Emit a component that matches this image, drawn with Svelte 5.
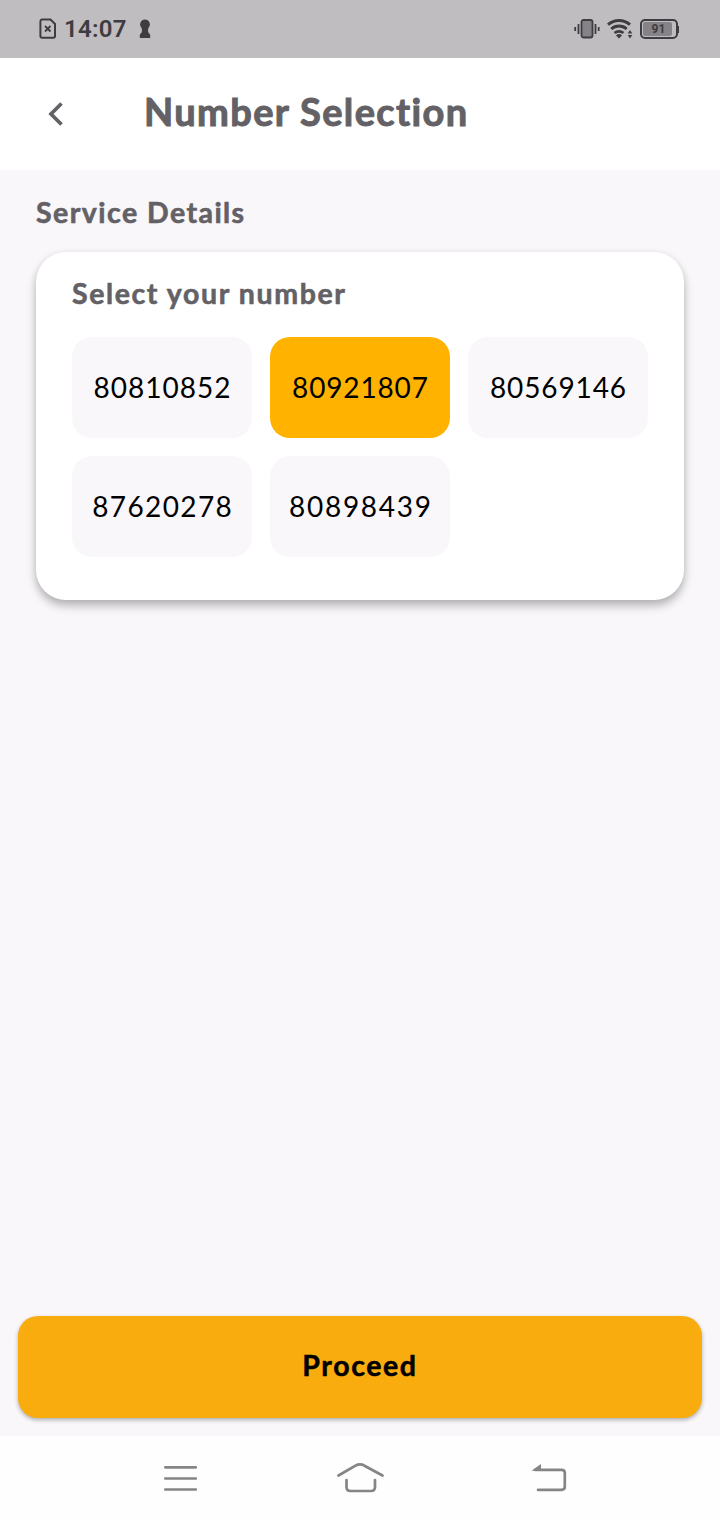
<script>
  const numbers = [
    { value: '80810852', spacing: 1.0 },
    { value: '80921807', spacing: 0.85 },
    { value: '80569146', spacing: 0.9 },
    { value: '87620278', spacing: 1.4 },
    { value: '80898439', spacing: 1.7 }
  ];
  let selected = $state('80921807');
</script>

<div class="screen">
  <div class="status">
    <svg class="sim" width="18" height="22" viewBox="0 0 18 22" fill="none" stroke="#3e3c40" stroke-width="2">
      <path d="M3 1.5h8.5l4.500 4.500v12a1.800 1.800 0 0 1-1.800 1.800H3.200A1.800 1.800 0 0 1 1.400 18V3.200A1.800 1.800 0 0 1 3 1.500Z" />
      <path d="m6 8 5.500 5.500m0-5.500L6 13.500" stroke-width="1.800" />
    </svg>
    <span class="time">14:07</span>
    <svg class="keyhole" width="12" height="20" viewBox="0 0 12 20" fill="#3e3c40">
      <path d="M6 .5a4.900 4.900 0 0 1 3.500 8.300L9.300 10l-.4.8.4 2.400 1.900 2.500V19H.8V15.700l1.900-2.500.4-2.400-.4-.8-.2-1.200A4.900 4.900 0 0 1 6 .5Z" />
    </svg>
    <div class="spacer"></div>
    <svg class="vibrate" width="26" height="22" viewBox="0 0 26 22" fill="none" stroke="#3e3c40" stroke-width="1.800">
      <rect x="7.500" y="2" width="11" height="17.500" rx="2" fill="#858387" />
      <path d="M4.500 6v10M1.200 9v4M21.500 6v10M24.700 9v4" />
    </svg>
    <svg class="wifi" width="27" height="22" viewBox="0 0 27 22" fill="none" stroke="#3e3c40" stroke-width="2.900">
      <path d="M1 6.700a16.500 16.500 0 0 1 22 0M4.300 11a11.500 11.500 0 0 1 15.400 0M7.600 15a6.800 6.800 0 0 1 8.800 0" />
      <path d="m12 20.500-3-3a4.400 4.400 0 0 1 6 0Zm11-8.500 2.300 3.500h-4.600ZM23 20.500 20.700 17h4.600Z" fill="#3e3c40" stroke="none" />
    </svg>
    <div class="battery"><div class="charge"></div><span>91</span></div>
    <i class="nub"></i>
  </div>

  <header>
    <svg width="16" height="26" viewBox="0 0 16 26" fill="none" stroke="#636165" stroke-width="3.700">
      <path d="M14.500 2.500 4 13 14.500 23.500" />
    </svg>
    <h1>Number Selection</h1>
  </header>

  <main>
    <h2>Service Details</h2>
    <section>
      <h3>Select your number</h3>
      <div class="grid">
        {#each numbers as n (n.value)}
          <button
            class="number"
            class:selected={selected === n.value}
            onclick={() => (selected = n.value)}
          ><span style="letter-spacing: {n.spacing}px; margin-right: -{n.spacing}px">{n.value}</span></button>
        {/each}
      </div>
    </section>
    <button class="proceed">Proceed</button>
  </main>

  <nav>
    <svg width="36" height="30" viewBox="0 0 36 30" fill="none" stroke="#858585" stroke-width="2.700" stroke-linecap="round">
      <path d="M3.300 4.300h30.500M3.300 15.500h30.500M3.300 26.500h30.500" />
    </svg>
    <svg class="home" width="50" height="34" viewBox="0 0 50 34" fill="none" stroke="#858585" stroke-width="2.700" stroke-linecap="round">
      <path d="M3.500 14.500 20.500 4.700q4.500-2.600 9 0L47.500 14.500M11.500 19v7q0 4 4 4H36q4 0 4-4v-7" />
    </svg>
    <svg width="38" height="32" viewBox="0 0 38 32" fill="none" stroke="#858585" stroke-width="2.700" stroke-linecap="round">
      <path d="M5 7.800h26.500q3.300 0 3.300 3v14q0 3-3.300 3H8" />
      <path d="M1.500 8.800 11 2v6.800Z" fill="#858585" stroke="none" />
    </svg>
  </nav>
</div>

<style>
  :global(body) { margin: 0; }
  .screen {
    width: 720px;
    height: 1520px;
    display: flex;
    flex-direction: column;
    background: #f9f7fa;
    font-family: Lato, sans-serif;
    color: #636165;
    overflow: hidden;
  }
  .status {
    height: 58px;
    box-sizing: border-box;
    flex: none;
    display: flex;
    align-items: center;
    background: #c0bdc1;
    padding: 0 41px 0 39px;
    color: #3e3c40;
    font-family: Roboto, sans-serif;
  }
  .time { margin-left: 7px; width: 67px; font-size: 24px; font-weight: 600; letter-spacing: .3px; }
  .keyhole { margin-left: 8px; }
  .spacer { flex: 1; }
  .vibrate { margin-right: 7px; }
  .wifi { margin-right: 6px; }
  .battery {
    width: 38px;
    height: 20px;
    box-sizing: border-box;
    border: 2px solid #3e3c40;
    border-radius: 5px;
    padding: 1px;
    display: grid;
  }
  .charge { grid-area: 1 / 1; width: 29px; background: #858387; border-radius: 2px; }
  .battery span { grid-area: 1 / 1; place-self: center; font-size: 12px; line-height: 14px; font-weight: 700; }
  .nub { width: 1.500px; height: 7px; background: #3e3c40; }
  header {
    height: 112px;
    flex: none;
    display: flex;
    align-items: center;
    box-sizing: border-box;
    padding-left: 47px;
    background: #fff;
  }
  h1, h2, h3 { margin: 0; font-weight: 700; white-space: nowrap; -webkit-text-stroke: .6px currentColor; }
  h1 { margin: -6px 0 0 81px; font-size: 38px; line-height: 46px; letter-spacing: 1.350px; -webkit-text-stroke-width: 1px; }
  main { flex: 1; display: flex; flex-direction: column; padding: 24px 18px 18px; }
  h2 { margin-left: 18px; font-size: 28.500px; line-height: 36px; letter-spacing: 1.450px; }
  section {
    margin: 22px 18px 0;
    height: 348px;
    box-sizing: border-box;
    padding: 23px 36px 0;
    border-radius: 30px;
    background: #fff;
    box-shadow: 0 6px 10px rgba(0, 0, 0, .25), 0 1px 7px rgba(0, 0, 0, .08);
  }
  h3 { font-size: 28.500px; line-height: 36px; letter-spacing: 1.600px; }
  .grid { margin-top: 26px; display: grid; grid-template-columns: repeat(3, 180px); grid-auto-rows: 101px; gap: 18px; }
  button { border: 0; padding: 0; font-family: inherit; color: #000; }
  .number { background: #f9f7fa; border-radius: 20px; font-size: 28px; padding-bottom: 2px; }
  .number.selected { background: #ffb300; }
  .proceed {
    margin-top: auto;
    height: 102px;
    padding-bottom: 4px;
    border-radius: 20px;
    background: #f9ac0d;
    font-size: 28.500px;
    font-weight: 700;
    letter-spacing: 1.600px;
    -webkit-text-stroke: .5px currentColor;
    box-shadow: 0 2px 4px rgba(0, 0, 0, .3);
  }
  nav {
    height: 84px;
    flex: none;
    box-sizing: border-box;
    display: flex;
    align-items: center;
    justify-content: space-between;
    padding: 0 152px 0 162px;
    background: #fefefe;
  }
  .home { margin-right: 8px; }
</style>
